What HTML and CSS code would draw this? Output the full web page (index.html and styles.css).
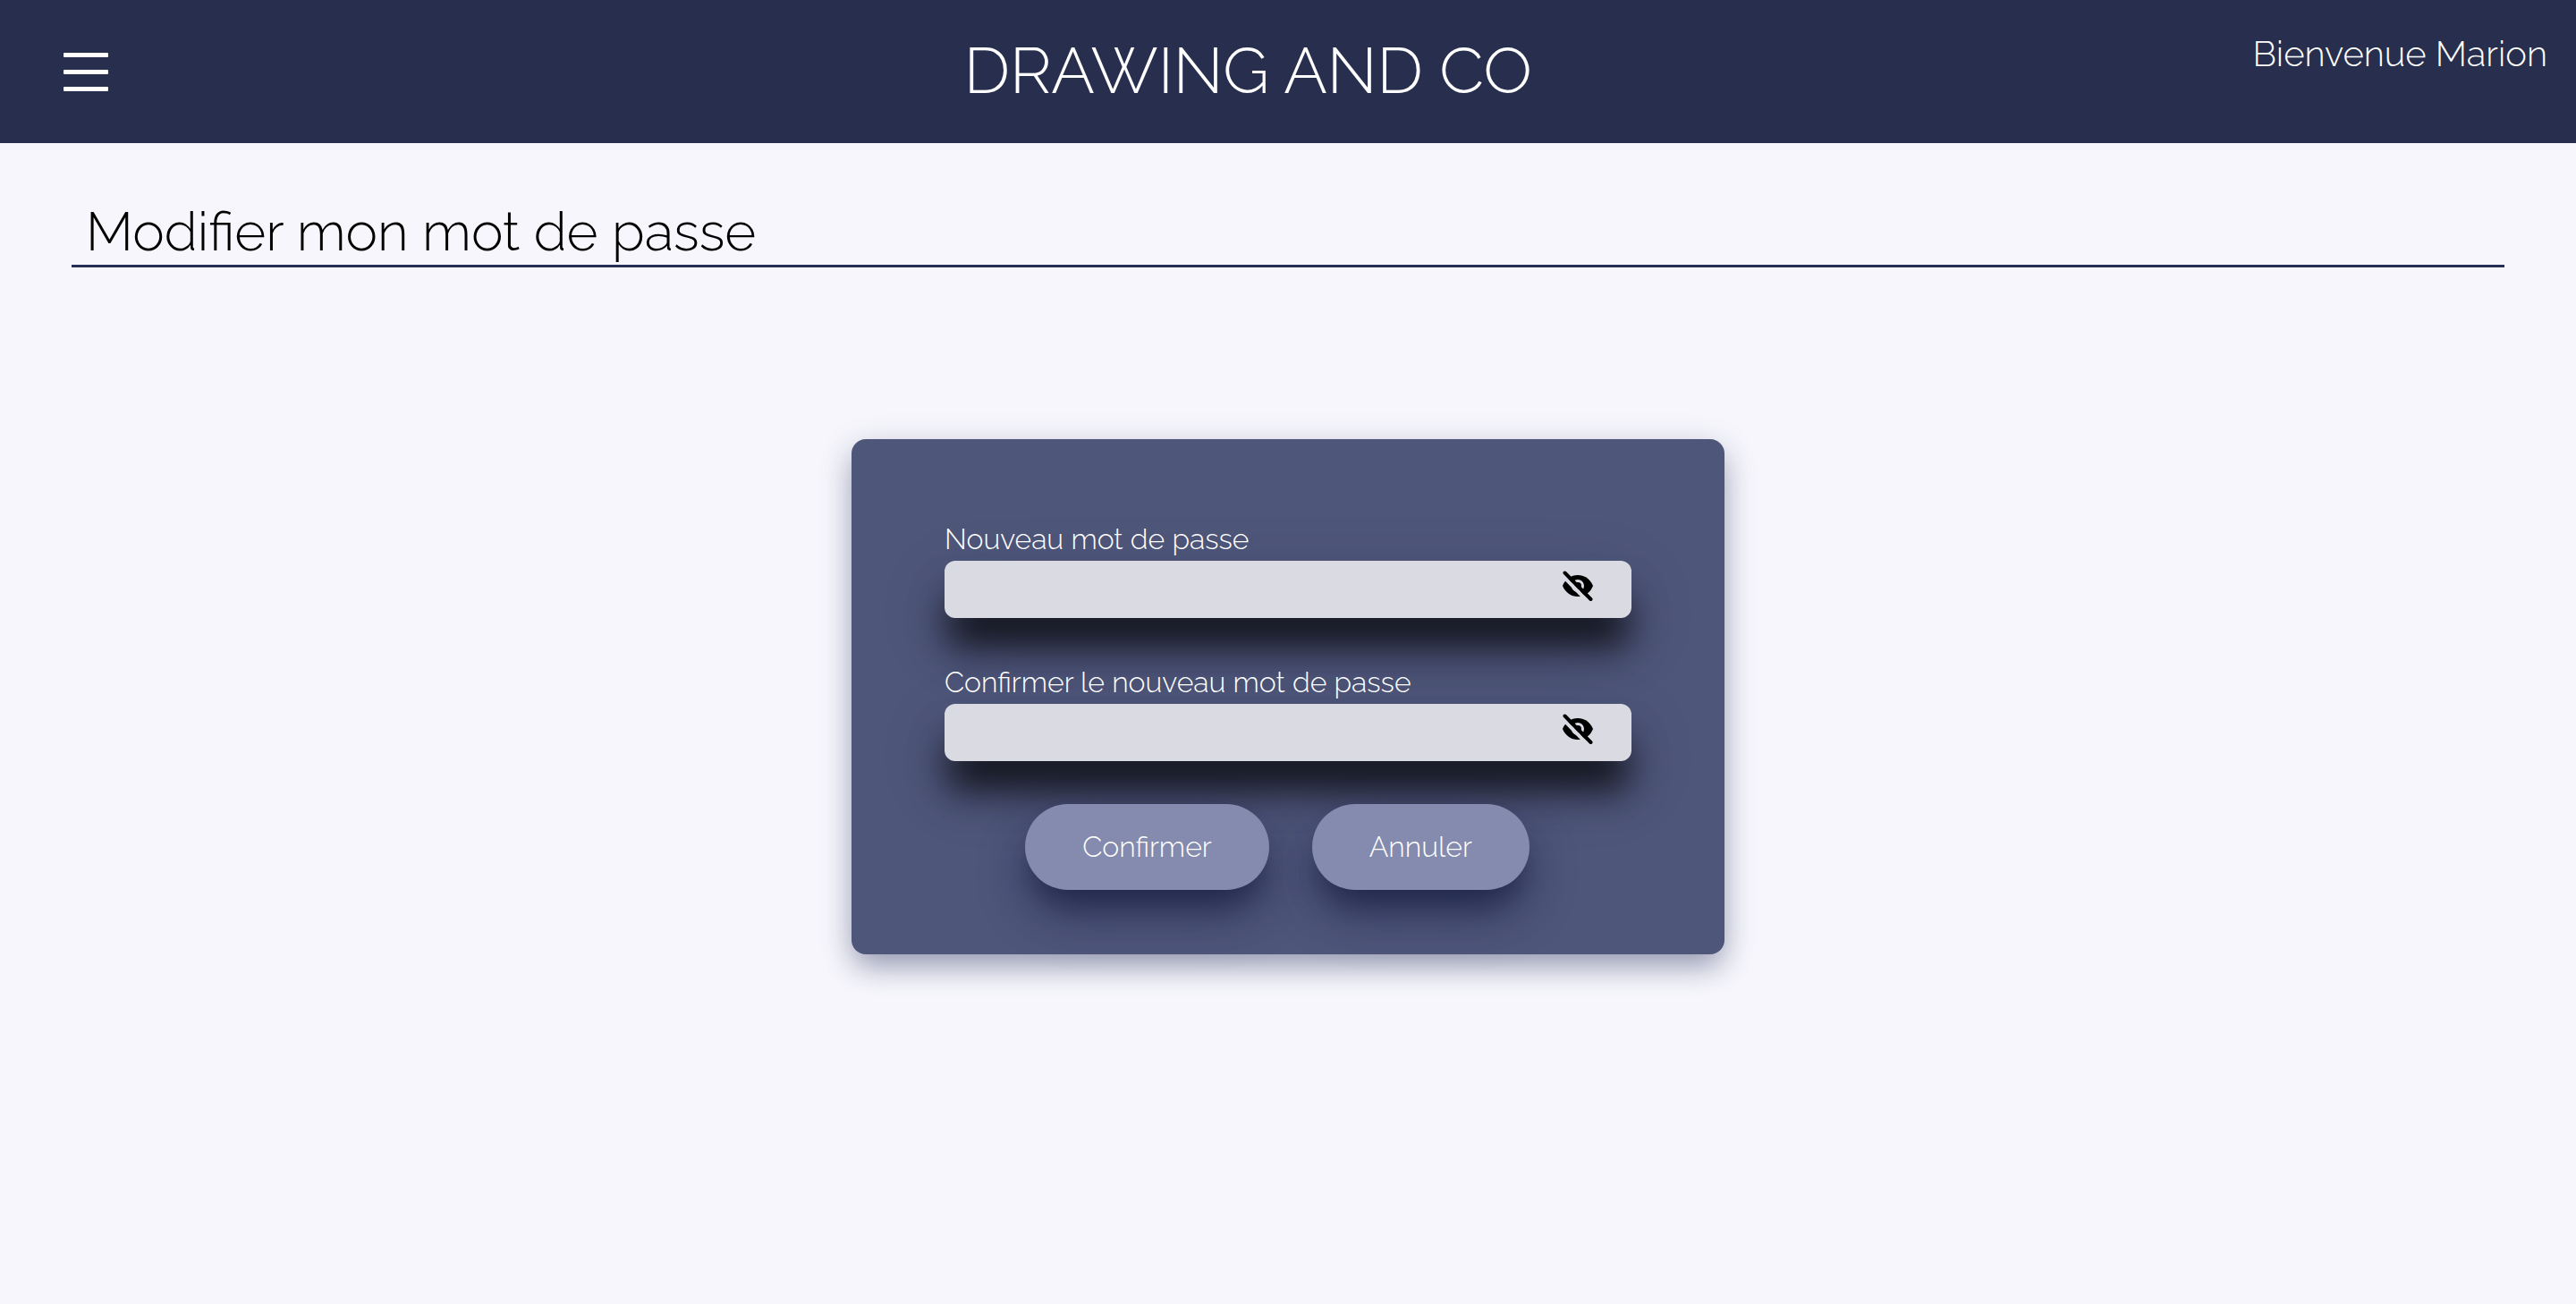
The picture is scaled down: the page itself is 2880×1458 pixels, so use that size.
FILE: index.html
```html
<!DOCTYPE html>
<html lang="fr">
<head>
<meta charset="utf-8">
<meta name="viewport" content="width=device-width, initial-scale=1">
<title>Drawing and Co – Modifier mon mot de passe</title>
<link rel="stylesheet" href="styles.css">
</head>
<body>
<header class="header">
  <div class="header-menu">
    <button class="burger" type="button" aria-label="Menu">
      <span class="burger-line"></span>
      <span class="burger-line"></span>
      <span class="burger-line"></span>
    </button>
  </div>
  <p class="brand">DRAWING AND CO</p>
  <p class="welcome">Bienvenue Marion</p>
</header>
<main class="main">
  <h1 class="page-title">Modifier mon mot de passe</h1>
  <form class="card">
    <div class="field">
      <label class="field-label" for="new-password">Nouveau mot de passe</label>
      <div class="field-box">
        <input class="field-input" id="new-password" type="password">
        <button class="toggle" type="button" aria-label="Afficher le mot de passe">
          <svg class="toggle-icon" viewBox="0 0 40 40" aria-hidden="true">
            <path class="eye" d="M3 20C6 12.500 12.500 8 20 8s14 4.500 17 12c-3 7.500-9.500 12-17 12S6 27.500 3 20z"/>
            <circle class="eye-ring" cx="20" cy="20" r="5.500"/>
            <path class="eye-gap" d="M2 7.500L32 38.500"/>
            <path class="eye-slash" d="M5.500 5.500L34.500 35"/>
          </svg>
        </button>
      </div>
    </div>
    <div class="field">
      <label class="field-label" for="confirm-password">Confirmer le nouveau mot de passe</label>
      <div class="field-box">
        <input class="field-input" id="confirm-password" type="password">
        <button class="toggle" type="button" aria-label="Afficher le mot de passe">
          <svg class="toggle-icon" viewBox="0 0 40 40" aria-hidden="true">
            <path class="eye" d="M3 20C6 12.500 12.500 8 20 8s14 4.500 17 12c-3 7.500-9.500 12-17 12S6 27.500 3 20z"/>
            <circle class="eye-ring" cx="20" cy="20" r="5.500"/>
            <path class="eye-gap" d="M2 7.500L32 38.500"/>
            <path class="eye-slash" d="M5.500 5.500L34.500 35"/>
          </svg>
        </button>
      </div>
    </div>
    <div class="actions">
      <button class="action" type="submit">Confirmer</button>
      <button class="action" type="button">Annuler</button>
    </div>
  </form>
</main>
</body>
</html>
```

FILE: styles.css
```css
* {
  box-sizing: border-box;
  margin: 0;
}

body {
  background: #f6f6fc;
  color: #000;
  font-family: Raleway, Lato, sans-serif;
  font-weight: 300;
}

button,
input {
  border: 0;
  font: inherit;
}

.header {
  display: flex;
  align-items: center;
  justify-content: space-between;
  min-height: 160px;
  padding-right: 32px;
  background: #282f4e;
  color: #fff;
}

.header-menu {
  width: 272px;
  padding-left: 71px;
}

.burger {
  display: flex;
  flex-direction: column;
  gap: 14px;
  width: 50px;
  padding: 0;
  background: none;
}

.burger-line {
  height: 5px;
  border-radius: 1px;
  background: #fff;
}

.brand {
  padding-bottom: 2px;
  font-size: 72px;
  line-height: 80px;
}

.welcome {
  align-self: flex-start;
  padding-top: 36px;
  font-size: 40px;
  line-height: 48px;
}

.main {
  display: flex;
  flex-direction: column;
  padding: 64px 80px;
}

.page-title {
  padding: 0 16px 2px;
  border-bottom: 3px solid #282f56;
  font-size: 60px;
  font-weight: 300;
  line-height: 70px;
}

.card {
  align-self: center;
  display: flex;
  flex-direction: column;
  gap: 48px;
  width: 976px;
  max-width: 100%;
  margin-top: 192px;
  padding: 92px 104px 72px;
  border-radius: 16px;
  background: #4e567a;
  box-shadow:
    0 16px 32px -4px rgba(40, 47, 92, 0.4),
    0 8px 40px rgba(40, 47, 92, 0.14);
  color: #fff;
}

.field + .field {
  padding-top: 4px;
}

.field-label {
  position: relative;
  display: block;
  height: 44px;
  font-size: 32px;
  line-height: 40px;
}

.field-box {
  display: flex;
  height: 64px;
  padding-right: 40px;
  border-radius: 12px;
  background: #dadae2;
  box-shadow:
    0 36px 40px -4px rgba(0, 0, 0, 0.75),
    0 26px 80px rgba(30, 22, 50, 0.15);
}

.field-input {
  flex: 1;
  min-width: 0;
  padding: 0 16px;
  background: none;
  font-size: 32px;
}

.toggle {
  padding: 0 0 8px;
  background: none;
}

.toggle-icon {
  display: block;
  width: 40px;
  height: 40px;
}

.eye {
  fill: #000;
}

.eye-ring {
  fill: none;
  stroke: #dadae2;
  stroke-width: 3;
}

.eye-gap {
  stroke: #dadae2;
  stroke-width: 4;
}

.eye-slash {
  stroke: #000;
  stroke-width: 4;
  stroke-linecap: round;
}

.actions {
  display: flex;
  justify-content: center;
  gap: 48px;
  padding-right: 24px;
}

.action {
  height: 96px;
  padding: 0 64px 2px;
  border-radius: 48px;
  background: #848bae;
  box-shadow:
    0 26px 40px -6px rgba(16, 24, 60, 0.75),
    0 28px 72px rgba(50, 30, 70, 0.12);
  color: #fff;
  font-size: 32px;
}
```
